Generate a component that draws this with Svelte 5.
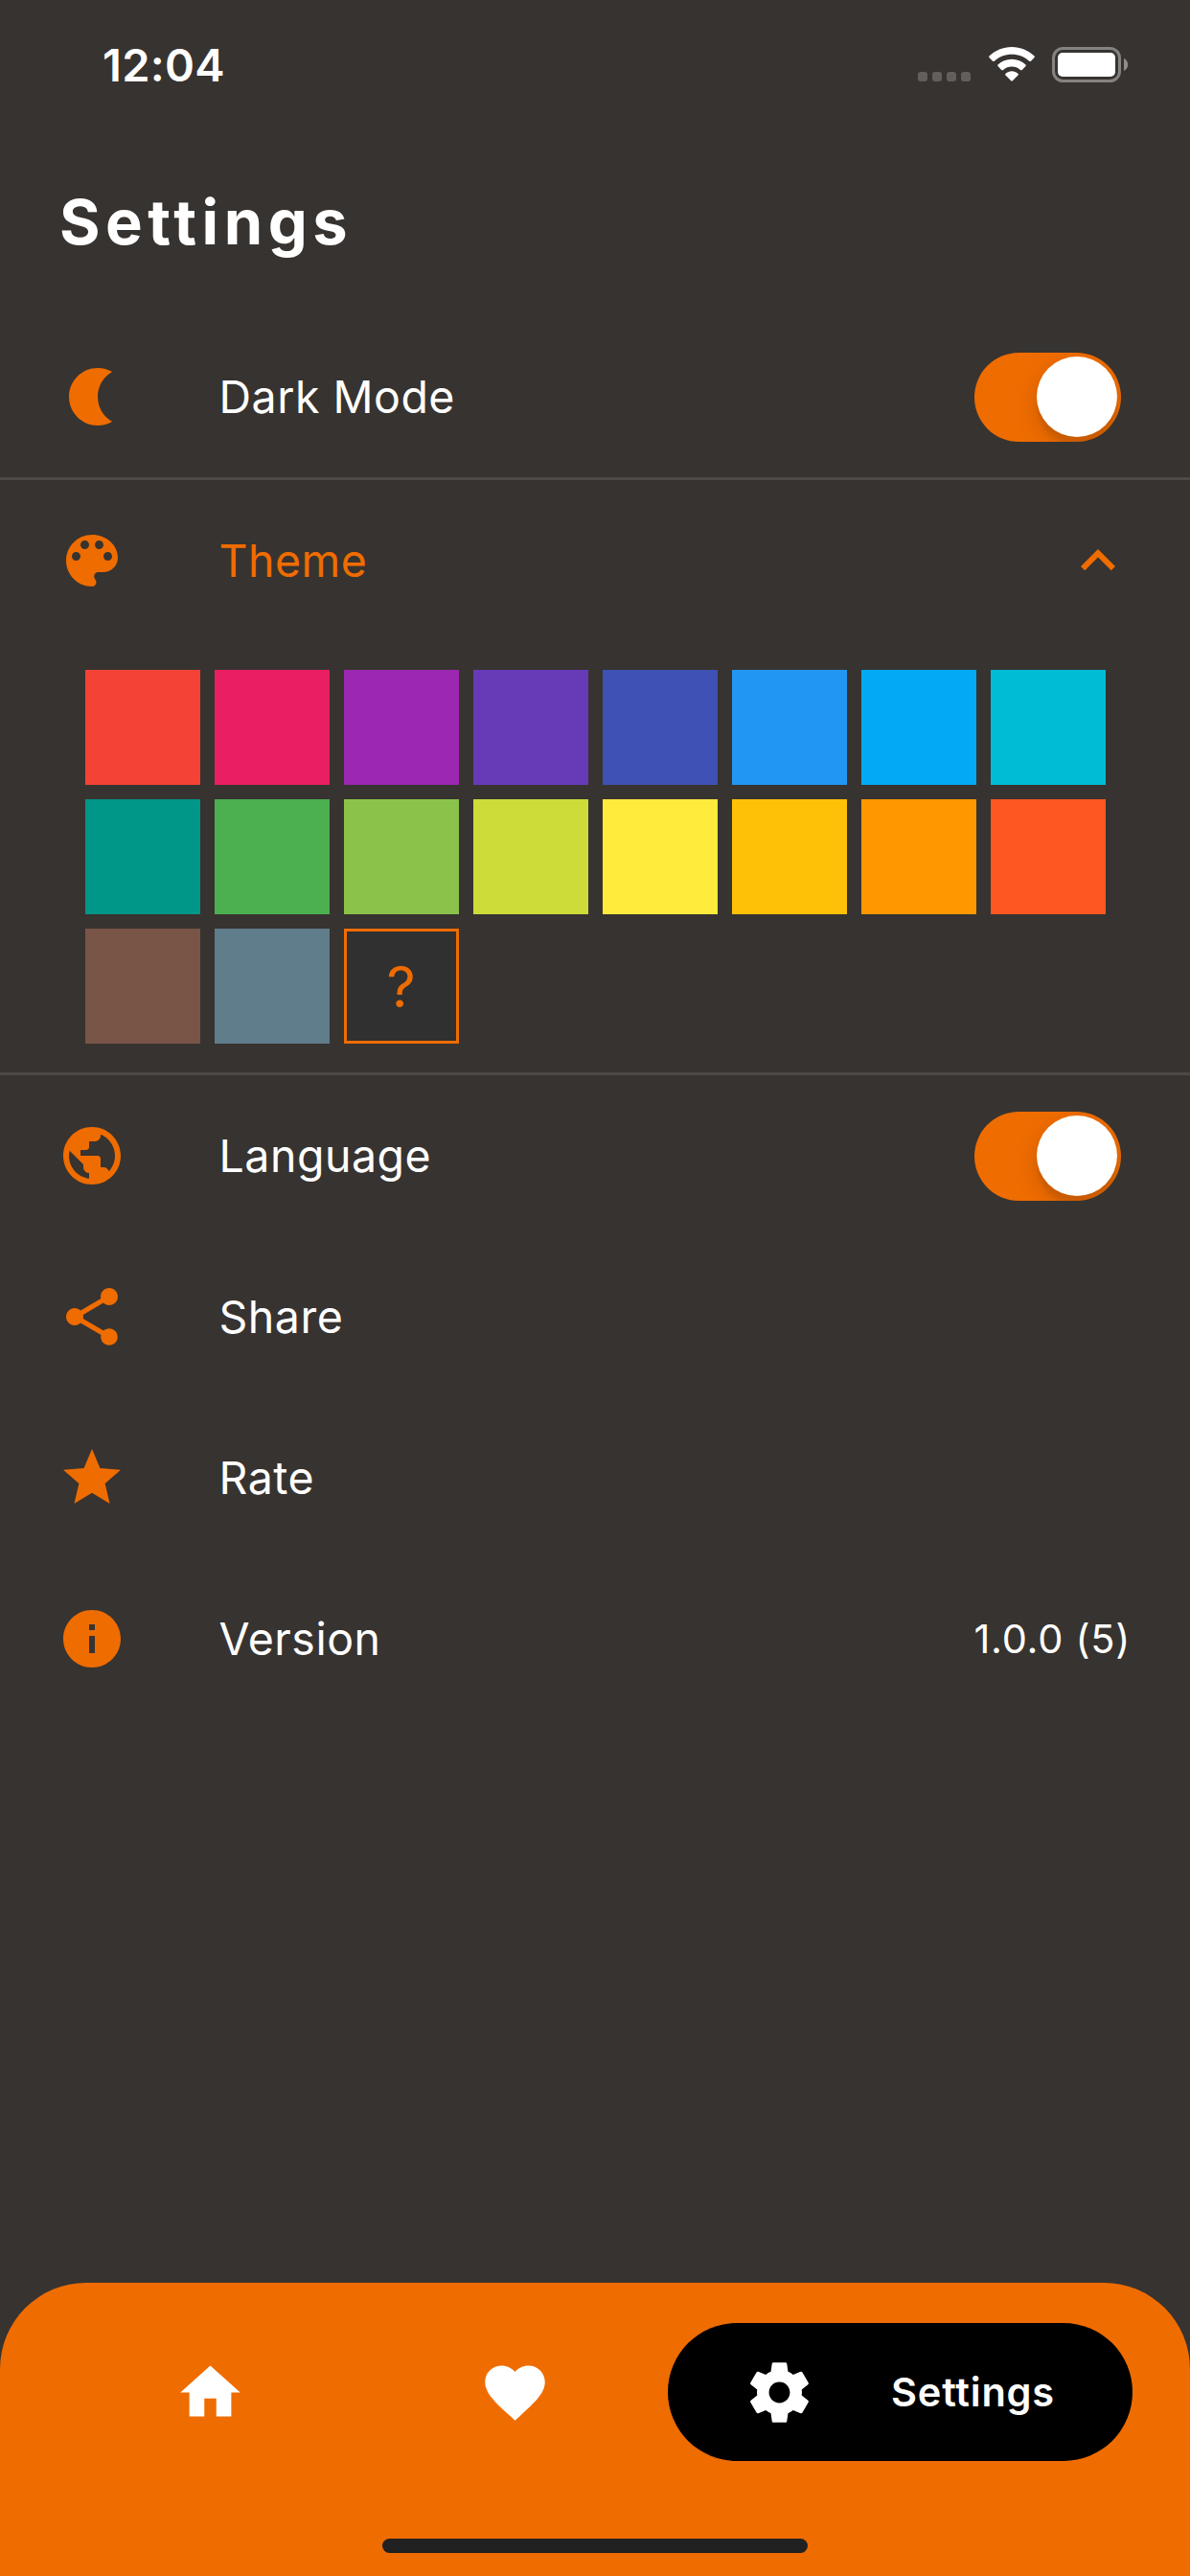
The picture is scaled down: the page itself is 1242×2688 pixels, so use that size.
<script lang="ts">
	let darkMode = true;
	let language = true;
	let themeOpen = true;

	const colors = [
		'#f44336', '#e91e63', '#9c27b0', '#673ab7', '#3f51b5', '#2196f3', '#03a9f4', '#00bcd4',
		'#009688', '#4caf50', '#8bc34a', '#cddc39', '#ffeb3b', '#ffc107', '#ff9800', '#ff5722',
		'#795548', '#607d8b'
	];

	const icons = {
		moon: 'M14 2c1.82 0 3.53.5 5 1.35-2.99 1.73-5 4.95-5 8.65s2.01 6.92 5 8.65c-1.47.85-3.18 1.35-5 1.35-5.52 0-10-4.48-10-10S8.48 2 14 2z',
		palette:
			'M12 3c-4.97 0-9 4.03-9 9s4.03 9 9 9c.83 0 1.5-.67 1.5-1.5 0-.39-.15-.74-.39-1.01-.23-.26-.38-.61-.38-.99 0-.83.67-1.5 1.5-1.5H16c2.76 0 5-2.24 5-5 0-4.42-4.03-8-9-8zm-5.5 9c-.83 0-1.5-.67-1.5-1.5S5.67 9 6.5 9 8 9.67 8 10.5 7.33 12 6.5 12zm3-4C8.67 8 8 7.33 8 6.5S8.67 5 9.5 5s1.5.67 1.5 1.5S10.33 8 9.5 8zm5 0c-.83 0-1.5-.67-1.5-1.5S13.67 5 14.5 5s1.5.67 1.5 1.5S15.33 8 14.5 8zm3 4c-.83 0-1.5-.67-1.5-1.5S16.67 9 17.5 9s1.5.67 1.5 1.5-.67 1.5-1.5 1.5z',
		chevron: 'M12 8l-6 6 1.41 1.41L12 10.83l4.59 4.58L18 14z',
		globe:
			'M12 2C6.48 2 2 6.48 2 12s4.48 10 10 10 10-4.48 10-10S17.52 2 12 2zm-1 17.93c-3.95-.49-7-3.85-7-7.93 0-.62.08-1.21.21-1.79L9 15v1c0 1.1.9 2 2 2v1.93zm6.9-2.54c-.26-.81-1-1.39-1.9-1.39h-1v-3c0-.55-.45-1-1-1H8v-2h2c.55 0 1-.45 1-1V7h2c1.1 0 2-.9 2-2v-.41c2.93 1.19 5 4.06 5 7.41 0 2.08-.8 3.97-2.1 5.39z',
		share:
			'M18 16.08c-.76 0-1.44.3-1.96.77L8.91 12.7c.05-.23.09-.46.09-.7s-.04-.47-.09-.7l7.05-4.11c.54.5 1.25.81 2.04.81 1.66 0 3-1.34 3-3s-1.34-3-3-3-3 1.34-3 3c0 .24.04.47.09.7L8.04 9.81C7.5 9.31 6.79 9 6 9c-1.66 0-3 1.34-3 3s1.34 3 3 3c.79 0 1.5-.31 2.04-.81l7.12 4.16c-.05.21-.08.43-.08.65 0 1.61 1.31 2.92 2.92 2.92s2.92-1.31 2.92-2.92-1.31-2.92-2.92-2.92z',
		star: 'M12 17.27L18.18 21l-1.64-7.03L22 9.24l-7.19-.61L12 2 9.19 8.63 2 9.24l5.46 4.73L5.82 21z',
		info: 'M12 2C6.48 2 2 6.48 2 12s4.48 10 10 10 10-4.48 10-10S17.52 2 12 2zm1 15h-2v-6h2v6zm0-8h-2V7h2v2z',
		home: 'M10 20v-6h4v6h5v-8h3L12 3 2 12h3v8z',
		heart:
			'M12 21.35l-1.45-1.32C5.4 15.36 2 12.28 2 8.5 2 5.42 4.42 3 7.5 3c1.74 0 3.41.81 4.5 2.09C13.09 3.81 14.76 3 16.5 3 19.58 3 22 5.42 22 8.5c0 3.78-3.4 6.86-8.55 11.54L12 21.35z',
		gear: 'M19.43 12.98c.04-.32.07-.64.07-.98s-.03-.66-.07-.98l2.11-1.65c.19-.15.24-.42.12-.64l-2-3.46c-.12-.22-.39-.3-.61-.22l-2.49 1c-.52-.4-1.08-.73-1.69-.98l-.38-2.65C14.46 2.18 14.25 2 14 2h-4c-.25 0-.46.18-.49.42l-.38 2.65c-.61.25-1.17.59-1.69.98l-2.49-1c-.23-.09-.49 0-.61.22l-2 3.46c-.13.22-.07.49.12.64l2.11 1.65c-.04.32-.07.65-.07.98s.03.66.07.98l-2.11 1.65c-.19.15-.24.42-.12.64l2 3.46c.12.22.39.3.61.22l2.49-1c.52.4 1.08.73 1.69.98l.38 2.65c.03.24.24.42.49.42h4c.25 0 .46-.18.49-.42l.38-2.65c.61-.25 1.17-.59 1.69-.98l2.49 1c.23.09.49 0 .61-.22l2-3.46c.12-.22.07-.49-.12-.64l-2.11-1.65zM12 15.5c-1.93 0-3.5-1.57-3.5-3.5s1.57-3.5 3.5-3.5 3.5 1.57 3.5 3.5-1.57 3.5-3.5 3.5z'
	};
</script>

<div class="screen">
	<div class="status">
		<span class="clock">12:04</span>
		<div class="signal"><i></i><i></i><i></i><i></i></div>
		<svg class="wifi" viewBox="0 0 48 36">
			<path d="M24 0C33 0 41.500 3.600 47.600 9.500Q48.200 10.300 47.600 11L44 14.700Q43.100 15.500 42.200 14.700C37.300 10.200 31 7.700 24 7.700S10.700 10.200 5.800 14.700Q4.900 15.500 4 14.700L.4 11Q-.2 10.300.4 9.500C6.500 3.600 15 0 24 0z" />
			<path d="M24 12.800c5.500 0 10.600 2.100 14.500 5.700q.8.800 0 1.600l-3.700 3.800q-.9.800-1.800 0c-2.500-2.200-5.600-3.400-9-3.400s-6.500 1.200-9 3.400q-.9.800-1.800 0l-3.700-3.800q-.8-.8 0-1.600c3.900-3.600 9-5.700 14.500-5.700z" />
			<path d="M24 25.300c2.400 0 4.700.9 6.400 2.400q.9.800.1 1.700l-5.700 5.900q-.8.700-1.600 0l-5.700-5.900q-.8-.9.1-1.700c1.700-1.500 4-2.400 6.400-2.400z" />
		</svg>
		<svg class="battery" viewBox="0 0 80 37">
			<rect class="shell" x="1.500" y="1.500" width="69" height="34" rx="10" />
			<rect x="6" y="6" width="60" height="25" rx="5" />
			<path class="nub" d="M75 12c5.500 2.300 5.500 10.700 0 13z" />
		</svg>
	</div>

	<h1>Settings</h1>

	<div class="row">
		<svg viewBox="0 0 24 24"><path d={icons.moon} /></svg>
		<span class="label">Dark Mode</span>
		<button class="switch" class:on={darkMode} aria-label="Dark Mode" on:click={() => (darkMode = !darkMode)}>
			<span class="thumb"></span>
		</button>
	</div>

	<div class="theme">
		<div class="row active">
			<svg viewBox="0 0 24 24"><path d={icons.palette} /></svg>
			<span class="label">Theme</span>
			<svg viewBox="0 0 24 24"><path d={icons.chevron} /></svg>
		</div>
		{#if themeOpen}
			<div class="swatches">
				{#each colors as color (color)}
					<div class="swatch" style="background-color: {color}"></div>
				{/each}
				<div class="swatch custom">?</div>
			</div>
		{/if}
	</div>

	<div class="row">
		<svg viewBox="0 0 24 24"><path d={icons.globe} /></svg>
		<span class="label">Language</span>
		<button class="switch" class:on={language} aria-label="Language" on:click={() => (language = !language)}>
			<span class="thumb"></span>
		</button>
	</div>
	<div class="row">
		<svg viewBox="0 0 24 24"><path d={icons.share} /></svg>
		<span class="label">Share</span>
	</div>
	<div class="row">
		<svg viewBox="0 0 24 24"><path d={icons.star} /></svg>
		<span class="label">Rate</span>
	</div>
	<div class="row">
		<svg viewBox="0 0 24 24"><path d={icons.info} /></svg>
		<span class="label">Version</span>
		<span class="version">1.0.0 (5)</span>
	</div>

	<nav>
		<div class="tabs">
			<svg viewBox="0 0 24 24"><path d={icons.home} /></svg>
			<svg viewBox="0 0 24 24"><path d={icons.heart} /></svg>
			<div class="pill">
				<svg viewBox="0 0 24 24"><path d={icons.gear} /></svg>
				<span>Settings</span>
			</div>
		</div>
		<div class="indicator"></div>
	</nav>
</div>

<style>
	:global(body) {
		background: #373330;
	}
	.screen {
		display: flex;
		flex-direction: column;
		width: 1242px;
		height: 2688px;
		background: #373330;
		color: #fff;
		font-family: Inter, 'Liberation Sans', sans-serif;
	}
	.status {
		display: flex;
		align-items: flex-start;
		box-sizing: border-box;
		height: 132px;
		padding: 49px 64px 0 107px;
	}
	.clock {
		flex-grow: 1;
		font-size: 47px;
		line-height: 38px;
		font-weight: 600;
		letter-spacing: 0.3px;
	}
	.signal {
		display: flex;
		gap: 5px;
		margin: 26px 19px 0 0;
	}
	.signal i {
		width: 10px;
		height: 10px;
		border-radius: 3px;
		background: #635f5d;
	}
	.wifi {
		width: 48px;
		height: 36px;
		margin-right: 18px;
		fill: #fff;
	}
	.battery {
		width: 80px;
		height: 37px;
		fill: #fff;
	}
	.battery .shell {
		fill: none;
		stroke: #858381;
		stroke-width: 3;
	}
	.battery .nub {
		fill: #918f8d;
	}
	h1 {
		margin: 0;
		box-sizing: border-box;
		height: 198px;
		padding: 60px 0 0 62px;
		font-size: 65px;
		line-height: 80px;
		font-weight: 700;
		letter-spacing: 5.5px;
	}
	.row {
		display: flex;
		align-items: center;
		height: 168px;
		padding: 0 60px;
	}
	.row svg {
		width: 72px;
		height: 72px;
		fill: #ef6c00;
	}
	.label {
		flex-grow: 1;
		margin-left: 96.5px;
		font-size: 46.5px;
		line-height: 60px;
		letter-spacing: 0.5px;
	}
	.active .label {
		color: #ef6c00;
	}
	.version {
		margin-right: 2px;
		font-size: 41.5px;
		line-height: 60px;
		letter-spacing: 0.7px;
	}
	.switch {
		display: flex;
		justify-content: flex-start;
		align-items: center;
		width: 153px;
		height: 93px;
		margin-right: 12px;
		padding: 0 4.5px;
		border: 0;
		border-radius: 46.5px;
		background: #5a5653;
		overflow: hidden;
	}
	.switch.on {
		justify-content: flex-end;
		background: #ef6c00;
	}
	.thumb {
		width: 84px;
		height: 84px;
		border-radius: 50%;
		background: #fff;
		box-shadow:
			0 9px 24px rgba(0, 0, 0, 0.15),
			0 9px 3px rgba(0, 0, 0, 0.06);
	}
	.theme {
		border-top: 3px solid #4d4947;
		border-bottom: 3px solid #4d4947;
	}
	.swatches {
		display: flex;
		flex-wrap: wrap;
		gap: 15px;
		padding: 30px 88.5px;
	}
	.swatch {
		width: 120px;
		height: 120px;
	}
	.custom {
		box-sizing: border-box;
		border: 3px solid #ef6c00;
		background: #303030;
		color: #ef6c00;
		font-size: 59px;
		line-height: 116px;
		text-align: center;
	}
	nav {
		display: flex;
		flex-direction: column;
		align-items: center;
		justify-content: space-between;
		box-sizing: border-box;
		width: 100%;
		height: 306px;
		margin-top: auto;
		padding: 42px 60px 24px;
		border-radius: 90px 90px 0 0;
		background: #ef6c00;
	}
	.tabs {
		display: flex;
		align-items: center;
		width: 100%;
	}
	.tabs svg {
		width: 75px;
		height: 75px;
		margin-left: 122px;
		margin-right: 121px;
		fill: #fff;
	}
	.pill {
		display: flex;
		align-items: center;
		box-sizing: border-box;
		width: 485px;
		height: 144px;
		margin-left: auto;
		border-radius: 72px;
		background: #000;
	}
	.pill svg {
		margin: 0 79px 0 79px;
	}
	.pill span {
		font-size: 41.5px;
		font-weight: 600;
		letter-spacing: 0.8px;
		white-space: nowrap;
	}
	.indicator {
		width: 444px;
		height: 15px;
		border-radius: 8px;
		background: #212121;
	}
</style>
